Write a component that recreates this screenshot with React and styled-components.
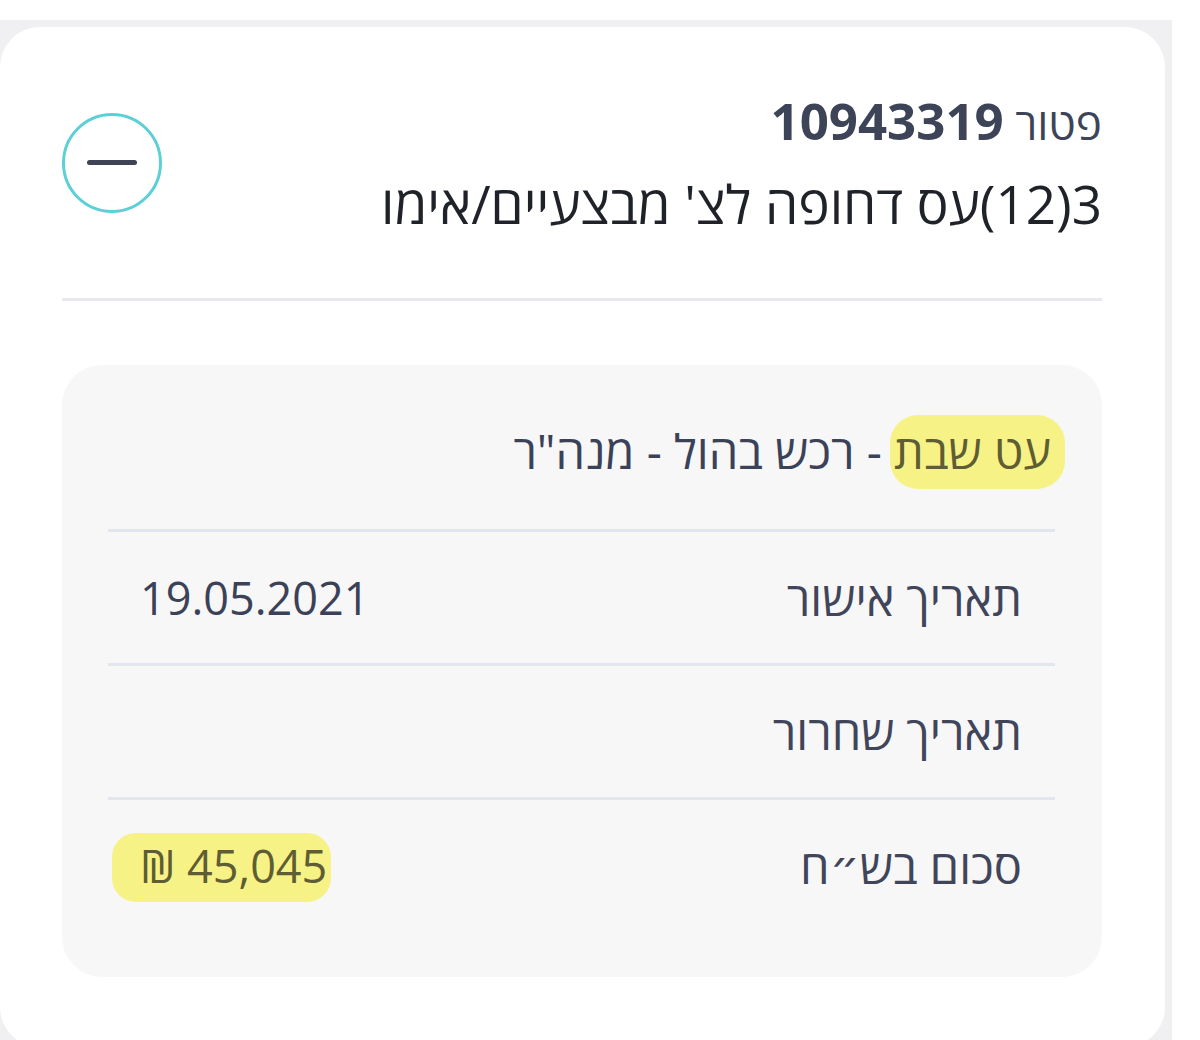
import React from "react";
import styled, { createGlobalStyle } from "styled-components";

const GlobalStyle = createGlobalStyle`
    body {
        margin: 0;
        background: #ffffff;
        font-family: "Open Sans", "DejaVu Sans", sans-serif;
    }
`;

const Frame = styled.div`
    margin-top: 20px;
    width: 1172px;
    height: 1020px;
    box-sizing: border-box;
    padding: 7px 7px 0 0;
    background: #f0f0f2;
    overflow: hidden;
`;

const Card = styled.div`
    height: 1020px;
    box-sizing: border-box;
    background: #ffffff;
    border-radius: 40px;
    padding: 0 63px 0 62px;
    direction: rtl;
    color: #3b4157;
`;

const Header = styled.div`
    height: 271px;
    display: flex;
    align-items: center;
    justify-content: space-between;
`;

const TitleBlock = styled.div`
    display: flex;
    flex-direction: column;
    gap: 22px;
    margin-top: 2px;
`;

const TitleLine = styled.div`
    font-size: 44px;
    line-height: 56px;
    color: #3e4458;
`;

const Number = styled.span`
    font-weight: 700;
    font-size: 51px;
`;

const SubTitle = styled.div`
    font-size: 53px;
    line-height: 62px;
    color: #1f2229;
`;

const ToggleButton = styled.button`
    width: 100px;
    height: 100px;
    border-radius: 50%;
    border: 3px solid #5ccfd8;
    background: #ffffff;
    display: flex;
    align-items: center;
    justify-content: center;
    padding: 0;
    cursor: pointer;
`;

const MinusBar = styled.span`
    width: 50px;
    height: 5px;
    border-radius: 3px;
    background: #3f4356;
`;

const Divider = styled.div`
    height: 3px;
    background: #e7e8f0;
`;

const Panel = styled.div`
    margin-top: 64px;
    background: #f7f7f8;
    border-radius: 40px;
    padding: 0 47px 46px 46px;
`;

const PanelHeading = styled.div`
    height: 164px;
    box-sizing: border-box;
    padding: 56px 4px 0 0;
    font-size: 47px;
    line-height: 60px;
    color: #3b4157;
`;

const Marker = styled.span`
    background: rgba(246, 240, 90, 0.72);
    color: #5e5d33;
    border-radius: ${(p) => p.$radius || 28}px;
    padding: ${(p) => p.$pad || "4px 14px 6px 4px"};
    margin: ${(p) => p.$margin || "0 -14px 0 -4px"};
    box-decoration-break: clone;
`;

const Row = styled.div`
    height: 131px;
    border-top: 3px solid #e4e6ee;
    display: flex;
    align-items: center;
    justify-content: space-between;
    padding: 0 33px 0 32px;
`;

const Label = styled.span`
    font-size: 47px;
    color: #40455a;
`;

const Value = styled.span`
    direction: ltr;
    font-size: 45px;
    color: #3b4157;
`;

const rows = [
    { label: "תאריך אישור", value: "19.05.2021" },
    { label: "תאריך שחרור", value: "" },
    { label: "סכום בש״ח", value: "₪ 45,045", marked: true },
];

const App = () => {
    return (
        <>
            <GlobalStyle />
            <Frame>
                <Card>
                    <Header>
                        <TitleBlock>
                            <TitleLine>
                                פטור <Number>10943319</Number>
                            </TitleLine>
                            <SubTitle>3(12)עס דחופה לצ' מבצעיים/אימו</SubTitle>
                        </TitleBlock>
                        <ToggleButton aria-label="collapse">
                            <MinusBar />
                        </ToggleButton>
                    </Header>
                    <Divider />

                    <Panel>
                        <PanelHeading>
                            <Marker>עט שבת</Marker> - רכש בהול - מנה"ר
                        </PanelHeading>
                        {rows.map((row) => (
                            <Row key={row.label}>
                                <Label>{row.label}</Label>
                                <Value>
                                    {row.marked ? (
                                        <Marker $radius={24} $pad="2px 4px 6px 28px" $margin="0 -4px 0 -28px">
                                            {row.value}
                                        </Marker>
                                    ) : (
                                        row.value
                                    )}
                                </Value>
                            </Row>
                        ))}
                    </Panel>
                </Card>
            </Frame>
        </>
    );
};

export default App;
